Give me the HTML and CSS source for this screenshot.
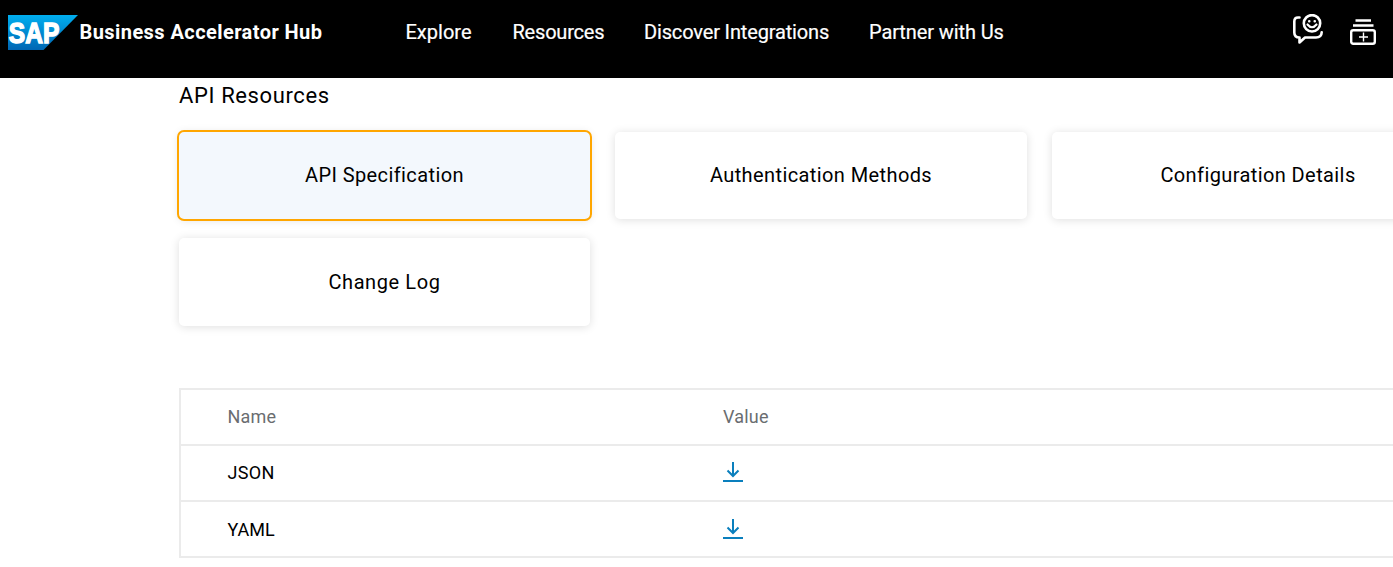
FILE: index.html
```html
<!DOCTYPE html>
<html lang="en">
<head>
<meta charset="utf-8">
<title>SAP Business Accelerator Hub</title>
<link rel="stylesheet" href="styles.css">
</head>
<body>
<header class="topbar">
  <svg class="logo" width="70" height="35" viewBox="0 0 70 35">
    <defs><linearGradient id="sap" x1="0" y1="0" x2="0" y2="1"><stop offset="0" stop-color="#00aeef"/><stop offset="1" stop-color="#0066b3"/></linearGradient></defs>
    <path d="M0 0H70L35.500 35H0Z" fill="url(#sap)"/>
    <text class="logo-text" x="0.800" y="28" textLength="50.500" lengthAdjust="spacingAndGlyphs">SAP</text>
  </svg>
  <span class="brand">Business Accelerator Hub</span>
  <nav class="nav">
    <a class="n-explore">Explore</a><a class="n-resources">Resources</a><a class="n-discover">Discover Integrations</a><a class="n-partner">Partner with Us</a>
  </nav>
  <div class="actions">
    <svg width="32" height="32" viewBox="0 0 32 32" fill="none" stroke="#fff" stroke-width="2.600" stroke-linecap="round" stroke-linejoin="round">
      <path d="M7.500 3.500H6Q2.300 3.500 2.300 7.500V18.500Q2.300 23.500 7.500 23.500V28.500L13 23.500H24Q29.500 23.500 29.700 18.300"/>
      <circle cx="20" cy="9.300" r="8.200"/>
      <path d="M15.500 10.500Q20 16 24.500 10.500" stroke-width="2.200"/>
      <path d="M17.200 7.300H17.300M22.700 7.300H22.800" stroke-width="2.500"/>
    </svg>
    <svg class="collect" width="26" height="26" viewBox="0 0 26 26" fill="none" stroke="#fff" stroke-width="2.400">
      <path d="M5.500 1.500H21M3 6.500H23.500"/>
      <rect x="1.200" y="11.200" width="23.600" height="13.600" rx="2"/>
      <path d="M13.500 13.500V22.500M9 18H18" stroke-width="1.400"/>
    </svg>
  </div>
</header>
<main class="main">
  <h1 class="title">API Resources</h1>
  <div class="cards">
    <div class="card selected">API Specification</div>
    <div class="card">Authentication Methods</div>
    <div class="card">Configuration Details</div>
    <div class="card log">Change Log</div>
  </div>
  <div class="table">
    <div class="row head"><span class="name">Name</span><span class="value">Value</span></div>
    <div class="row"><span class="json">JSON</span>
      <svg class="dl up" width="20" height="20" viewBox="0 0 20 20" fill="none" stroke="#0a7fbd" stroke-width="2"><path d="M10 0V14M4.500 8.500L10 14L15.500 8.500M0 19H20"/></svg></div>
    <div class="row"><span class="yaml">YAML</span>
      <svg class="dl" width="20" height="20" viewBox="0 0 20 20" fill="none" stroke="#0a7fbd" stroke-width="2"><path d="M10 0V14M4.500 8.500L10 14L15.500 8.500M0 19H20"/></svg></div>
  </div>
</main>
</body>
</html>
```
FILE: styles.css
```css
* { box-sizing: border-box; }
body { margin: 0; width: 1393px; height: 567px; overflow: hidden; background: #fff; color: #000; font-family: Roboto, "Liberation Sans", sans-serif; }
.topbar { display: flex; align-items: flex-start; height: 78px; background: #000; color: #fff; padding-left: 8px; }
.logo { margin-top: 15px; flex: none; }
.logo-text { font: bold 30px "Liberation Sans", sans-serif; fill: #fff; stroke: #fff; stroke-width: 1.5px; }
.brand { width: 326px; padding-left: 1.5px; font-size: 20px; font-weight: 700; line-height: 24px; margin-top: 20px; white-space: nowrap; letter-spacing: 0.43px; flex: none; }
.nav { display: grid; grid-template-columns: 107px 131.500px 225px 200px; margin: 20px 0 0 1.5px; font-size: 20px; line-height: 24px; white-space: nowrap; -webkit-text-stroke: 0.2px #fff; }
.n-resources { letter-spacing: -0.2px; }
.n-discover { letter-spacing: -0.15px; }
.n-partner { letter-spacing: -0.1px; }
.actions { display: flex; gap: 26px; margin: 14px 17px 0 auto; }
.collect { margin-top: 5px; }
.main { padding-left: 179px; overflow: hidden; }
.title { margin: 4px 0 0; font-size: 22px; font-weight: 400; line-height: 28px; letter-spacing: 0.62px; }
.cards { display: grid; grid-template-columns: 411px 412px 412px; grid-template-rows: 87px 88px; gap: 19px 25px; margin-top: 22px; }
.card { display: flex; align-items: center; justify-content: center; padding-bottom: 1px; border-radius: 5px; background: #fff; font-size: 20px; letter-spacing: 0.4px; box-shadow: 0 1px 10px rgba(0,0,0,.13); white-space: nowrap; }
.log { padding-bottom: 0; letter-spacing: 0.6px; }
.selected { background: #f3f8fd; outline: 2px solid #ffa600; }
.table { margin-top: 62px; width: 1300px; border: 2px solid #ebebeb; }
.row { display: grid; grid-template-columns: 495.500px 1fr; align-items: center; height: 56px; padding-left: 46.500px; font-size: 18px; line-height: 22px; border-bottom: 2px solid #ebebeb; }
.row:last-child { height: 54px; border-bottom: 0; }
.head { color: #6a6d70; }
.name, .value { letter-spacing: 0.2px; padding-bottom: 1px; }
.json { letter-spacing: 0.3px; padding-bottom: 1px; }
.yaml { padding-top: 1px; }
.dl { display: block; }
.up { margin-bottom: 2px; }
```
